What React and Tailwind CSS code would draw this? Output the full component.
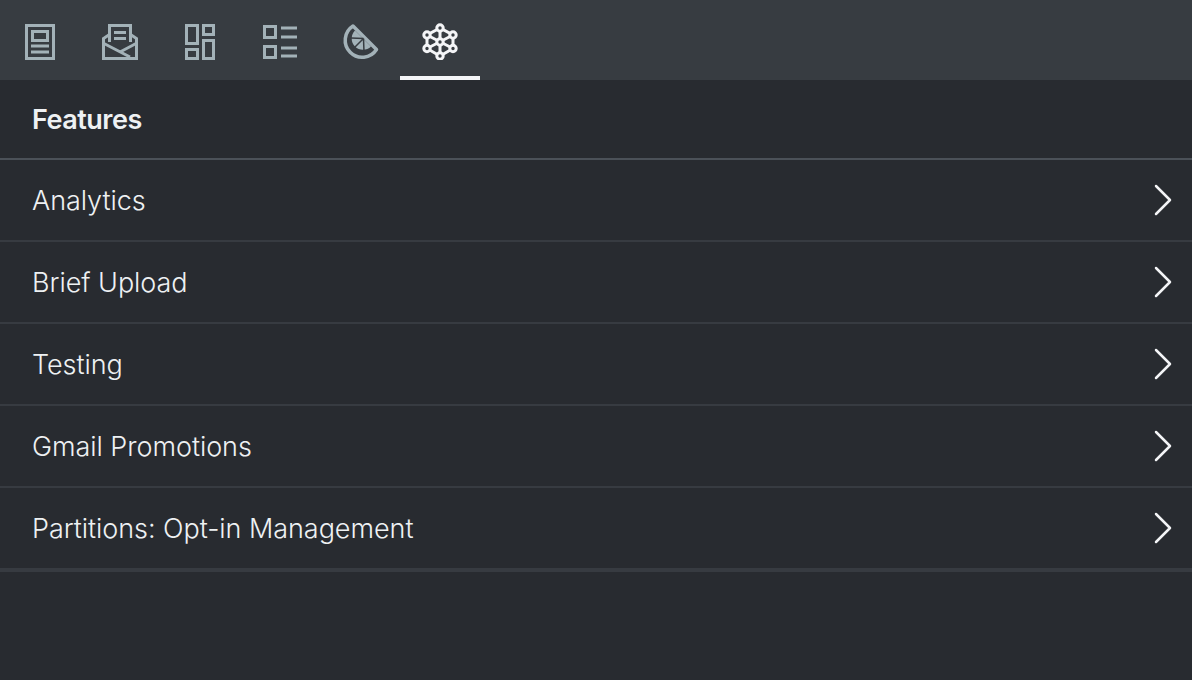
import React from "react";

const rows = ["Analytics", "Brief Upload", "Testing", "Gmail Promotions", "Partitions: Opt-in Management"];

const NewspaperIcon = () => (
  <svg width="40" height="40" viewBox="0 0 40 40" fill="none" stroke="#a3b2b8" strokeWidth="3">
    <rect x="6.5" y="5.5" width="27" height="33" />
    <rect x="12.5" y="11.5" width="15" height="9" />
    <path d="M11 26h18M11 32h18" />
  </svg>
);

const MailIcon = () => (
  <svg width="40" height="40" viewBox="0 0 40 40" fill="none" stroke="#a3b2b8" strokeWidth="3">
    <path d="M9.5 22V5.500h21V22" />
    <path d="M9.500 14.500l-6 4v20h33v-20l-6-4" />
    <path d="M3 23l27 14M37 23l-17 9" />
    <path d="M14 12.500h12M14 18.500h12" />
  </svg>
);

const DashboardIcon = () => (
  <svg width="40" height="40" viewBox="0 0 40 40" fill="none" stroke="#a3b2b8" strokeWidth="3">
    <rect x="6.5" y="5.5" width="11" height="18" />
    <rect x="6.5" y="29.5" width="11" height="9" />
    <rect x="23.5" y="5.5" width="10" height="9" />
    <rect x="23.5" y="20.5" width="10" height="18" />
  </svg>
);

const ListIcon = () => (
  <svg width="40" height="40" viewBox="0 0 40 40" fill="none" stroke="#a3b2b8" strokeWidth="3">
    <rect x="4.5" y="6.5" width="11" height="11" />
    <rect x="4.5" y="26.5" width="11" height="11" />
    <path d="M21 8h16M21 17h16M21 28h16M21 36h16" />
  </svg>
);

const CitrusIcon = () => (
  <svg width="40" height="40" viewBox="0 0 40 40" fill="none">
    <path d="M13 6A17 17 0 1 0 36.500 29.500z" stroke="#a3b2b8" strokeWidth="3.500" strokeLinejoin="round" />
    <path d="M15 10.500A11.300 11.300 0 0 0 31 26.500z" fill="#a3b2b8" />
    <path d="M23.500 18.500L11 18M23.500 18.500L14 28M23.500 18.500L24 32" stroke="#373c41" strokeWidth="1.500" />
  </svg>
);

const NetworkIcon = () => {
  const nodes = [[20, 8], [7, 15], [33, 15], [7, 28.500], [33, 28.500], [20, 36], [20, 22]];
  return (
    <svg width="40" height="40" viewBox="0 0 40 40" fill="none" stroke="#f4f5f7" strokeWidth="3">
      <path d="M20 8L7 15v13.500L20 36l13-7.500V15zM20 8v28M7 15l26 13.500M33 15L7 28.500" />
      {nodes.map(([cx, cy]) => (
        <circle key={`${cx}-${cy}`} cx={cx} cy={cy} r="3.200" fill="#373c41" />
      ))}
    </svg>
  );
};

const Chevron = () => (
  <svg width="20" height="34" viewBox="0 0 20 34" fill="none" stroke="#f4f5f7" strokeWidth="2.500" strokeLinecap="round" strokeLinejoin="round">
    <path d="M4 3l14 14-14 14" />
  </svg>
);

const tabs = [
  { id: "content", icon: <NewspaperIcon /> },
  { id: "mail", icon: <MailIcon /> },
  { id: "layout", icon: <DashboardIcon /> },
  { id: "list", icon: <ListIcon /> },
  { id: "citrus", icon: <CitrusIcon /> },
  { id: "features", icon: <NetworkIcon />, active: true },
];

export default function App() {
  return (
    <div className="flex min-h-[680px] w-full flex-col bg-[#282b30] font-['Inter',sans-serif] text-[#eef1f3]">
      <div className="flex h-20 bg-[#373c41]">
        {tabs.map((tab) => (
          <div
            key={tab.id}
            className={`flex h-20 w-20 items-center justify-center border-b-4 ${tab.active ? "border-[#f4f5f7]" : "border-transparent"}`}
          >
            <span className="mt-1 block h-10 w-10">{tab.icon}</span>
          </div>
        ))}
      </div>
      <div className="flex h-20 items-center border-b-2 border-[#4b5158] px-8 pt-0.5 text-[27px] font-semibold tracking-[-0.5px]">
        Features
      </div>
      {rows.map((row, i) => (
        <div
          key={row}
          className={`flex items-center justify-between pl-8 pr-5 text-[27px] font-light tracking-[-0.05px] ${i === rows.length - 1 ? "h-[84px] border-b-4" : "h-[82px] border-b-2"} border-[#373b41]`}
        >
          <span className="pt-0.5">{row}</span>
          <Chevron />
        </div>
      ))}
    </div>
  );
}
